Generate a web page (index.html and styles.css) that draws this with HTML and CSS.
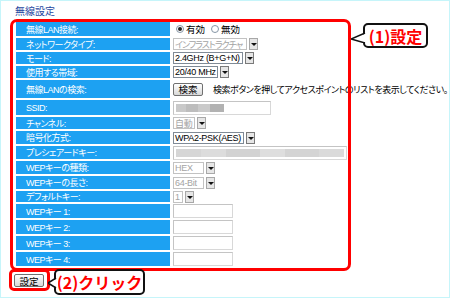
FILE: index.html
```html
<!DOCTYPE html>
<html lang="ja">
<head>
<meta charset="utf-8">
<link rel="stylesheet" href="styles.css">
</head>
<body>
<div class="frame">
  <div class="title">無線設定</div>
  <div class="form">
    <div class="lbl r1">無線LAN接続:</div>
    <div class="val"><span class="radio on"></span><span class="rtext">有効</span><span class="radio"></span><span class="rtext">無効</span></div>

    <div class="lbl">ネットワークタイプ:</div>
    <div class="val"><span class="sel dis"><span class="box w-infra jp">インフラストラクチャ</span><span class="arrow"></span></span></div>

    <div class="lbl">モード:</div>
    <div class="val"><span class="sel"><span class="box w-mode">2.4GHz (B+G+N)</span><span class="arrow"></span></span></div>

    <div class="lbl">使用する帯域:</div>
    <div class="val"><span class="sel"><span class="box w-band">20/40 MHz</span><span class="arrow"></span></span></div>

    <div class="lbl">無線LANの検索:</div>
    <div class="val"><span class="btn w-search">検索</span><span class="hint">検索ボタンを押してアクセスポイントのリストを表示してください。</span></div>

    <div class="lbl">SSID:</div>
    <div class="val"><span class="inp w-ssid"><span class="blur b-ssid"></span></span></div>

    <div class="lbl">チャンネル:</div>
    <div class="val"><span class="sel dis"><span class="box w-ch">自動</span><span class="arrow"></span></span></div>

    <div class="lbl">暗号化方式:</div>
    <div class="val"><span class="sel"><span class="box w-enc">WPA2-PSK(AES)</span><span class="arrow"></span></span></div>

    <div class="lbl">プレシェアードキー:</div>
    <div class="val"><span class="inp w-psk"><span class="blur b-psk"></span></span></div>

    <div class="lbl">WEPキーの種類:</div>
    <div class="val"><span class="sel dis"><span class="box w-hex">HEX</span><span class="arrow"></span></span></div>

    <div class="lbl">WEPキーの長さ:</div>
    <div class="val"><span class="sel dis"><span class="box w-bit">64-Bit</span><span class="arrow"></span></span></div>

    <div class="lbl">デフォルトキー:</div>
    <div class="val"><span class="sel dis"><span class="box w-one">1</span><span class="arrow"></span></span></div>

    <div class="lbl">WEPキー 1:</div>
    <div class="val"><span class="inp w-wep"></span></div>

    <div class="lbl">WEPキー 2:</div>
    <div class="val"><span class="inp w-wep"></span></div>

    <div class="lbl">WEPキー 3:</div>
    <div class="val"><span class="inp w-wep"></span></div>

    <div class="lbl">WEPキー 4:</div>
    <div class="val"><span class="inp w-wep"></span></div>
  </div>
  <div class="submit-row"><span class="btn w-submit">設定</span></div>

  <div class="mark mark-main"></div>
  <div class="mark mark-btn"></div>

  <div class="callout c1">
    <svg class="notch n1" width="16" height="10" viewBox="0 0 16 10"><path d="M16,0 L0,6 L16,10 Z" fill="#fff"/><polyline points="14,0 0,6 14,10" fill="none" stroke="#111" stroke-width="1.5"/></svg>
    (1)設定
  </div>
  <div class="callout c2">
    <svg class="notch n2" width="10" height="10" viewBox="0 0 10 10"><path d="M10,0 L0,5 L10,10 Z" fill="#fff"/><polyline points="8,0 0,5 8,10" fill="none" stroke="#111" stroke-width="1.5"/></svg>
    (2)クリック
  </div>
</div>
</body>
</html>
```
FILE: styles.css
```css
* { box-sizing: border-box; }
html, body { margin: 0; padding: 0; background: #fff; }
body {
  font-family: "Liberation Sans", "Noto Sans CJK JP", sans-serif;
  font-size: 9px;
  color: #000;
}
.frame {
  position: relative;
  width: 450px;
  height: 298px;
  border: 1px solid #c6f5fa;
  overflow: hidden;
}
.title {
  margin: 5px 0 0 14px;
  height: 12px;
  line-height: 12px;
  font-size: 10px;
  color: #27479f;
  font-feature-settings: "palt";
}
.form {
  display: grid;
  margin: 4px 0 0 15px;
  grid-template-columns: 154px 276px;
  grid-template-rows: 14px 12px 12px 12px 18px 15px 12px 13px 13px 13px 13px 11px 14px 14px 14px 14px;
  column-gap: 3px;
  row-gap: 2px;
}
.lbl {
  background: #1da1f2;
  color: #fff;
  padding-left: 10px;
  display: flex;
  align-items: center;
  font-size: 9px;
  letter-spacing: -0.5px;
  white-space: nowrap;
  font-feature-settings: "palt";
}
.val {
  display: flex;
  align-items: center;
  white-space: nowrap;
  font-feature-settings: "palt";
}
.radio {
  position: relative;
  width: 8px;
  height: 8px;
  border: 1px solid #8595a5;
  border-radius: 50%;
  background: #fff;
  margin-left: 3px;
}
.radio.on::after {
  content: "";
  position: absolute;
  left: 1px;
  top: 1px;
  width: 4px;
  height: 4px;
  border-radius: 50%;
  background: #222;
}
.rtext { margin: 0 3px 0 2px; font-size: 9.5px; }
.sel {
  display: flex;
  gap: 2px;
  height: 12px;
}
.sel .box {
  display: flex;
  align-items: center;
  height: 12px;
  border: 1px solid #7f8a96;
  padding: 0 1px;
  font-size: 9px;
  letter-spacing: -0.3px;
  overflow: hidden;
}
.sel .box.jp { letter-spacing: -1px; }
.sel .arrow {
  position: relative;
  width: 9px;
  height: 12px;
  border: 1px solid #7a7a7a;
  background: #e6e6e6;
}
.sel .arrow::after {
  content: "";
  position: absolute;
  left: 1px;
  top: 4px;
  border-left: 3px solid transparent;
  border-right: 3px solid transparent;
  border-top: 3px solid #111;
}
.sel.dis .box { color: #a3a3a3; border-color: #c2c2c2; }
.sel.dis .arrow { border-color: #a8a8a8; }
.w-infra { width: 74px; }
.w-mode { width: 70px; }
.w-band { width: 45px; }
.w-ch { width: 22px; }
.w-enc { width: 71px; }
.w-hex { width: 31px; }
.w-bit { width: 31px; }
.w-one { width: 10px; }
.btn {
  display: flex;
  align-items: center;
  justify-content: center;
  height: 13px;
  border: 1px solid #707070;
  border-radius: 2px;
  background: linear-gradient(#ffffff, #d8d8d8);
  font-size: 9.5px;
}
.w-search { width: 30px; }
.hint { margin-left: 10px; letter-spacing: -0.45px; }
.inp {
  display: flex;
  align-items: center;
  height: 14px;
  border: 1px solid #c4c4c4;
  border-right-color: #d8d8d8;
  border-bottom-color: #d8d8d8;
  padding-left: 2px;
  background: #fff;
}
.w-ssid { width: 98px; }
.w-psk { width: 174px; }
.w-wep { width: 60px; }
.blur { display: block; height: 8px; }
.b-ssid {
  width: 48px;
  background: linear-gradient(90deg, #c9c9c9 0 20%, #bdbdbd 20% 45%, #cacaca 45% 70%, #b2b2b2 70% 100%);
}
.b-psk {
  width: 168px;
  background: linear-gradient(90deg, #d6d6d6 0 15%, #dcdcdc 15% 30%, #d2d2d2 30% 50%, #dedede 50% 65%, #d4d4d4 65% 85%, #dadada 85% 100%);
}
.submit-row {
  margin: 8px 0 0 13px;
  display: flex;
}
.w-submit { width: 30px; }
.mark {
  position: absolute;
  border: 3px solid #ff0000;
}
.mark-main {
  left: 9px;
  top: 18px;
  width: 341px;
  height: 252px;
  border-radius: 7px;
}
.mark-btn {
  left: 8px;
  top: 268px;
  width: 41px;
  height: 22px;
  border-radius: 5px;
}
.callout {
  position: absolute;
  border: 2px solid #111;
  border-radius: 5px;
  background: #fff;
  color: #ff0000;
  font-family: "Noto Sans CJK JP", sans-serif;
  font-weight: bold;
  font-size: 16px;
  display: flex;
  align-items: center;
  justify-content: center;
  white-space: nowrap;
}
.c1 { left: 362px; top: 22px; width: 65px; height: 25px; }
.c2 { left: 53px; top: 268px; width: 91px; height: 26px; }
.notch { position: absolute; }
.n1 { left: -14px; top: 8px; }
.n2 { left: -8px; top: 7px; }
```
